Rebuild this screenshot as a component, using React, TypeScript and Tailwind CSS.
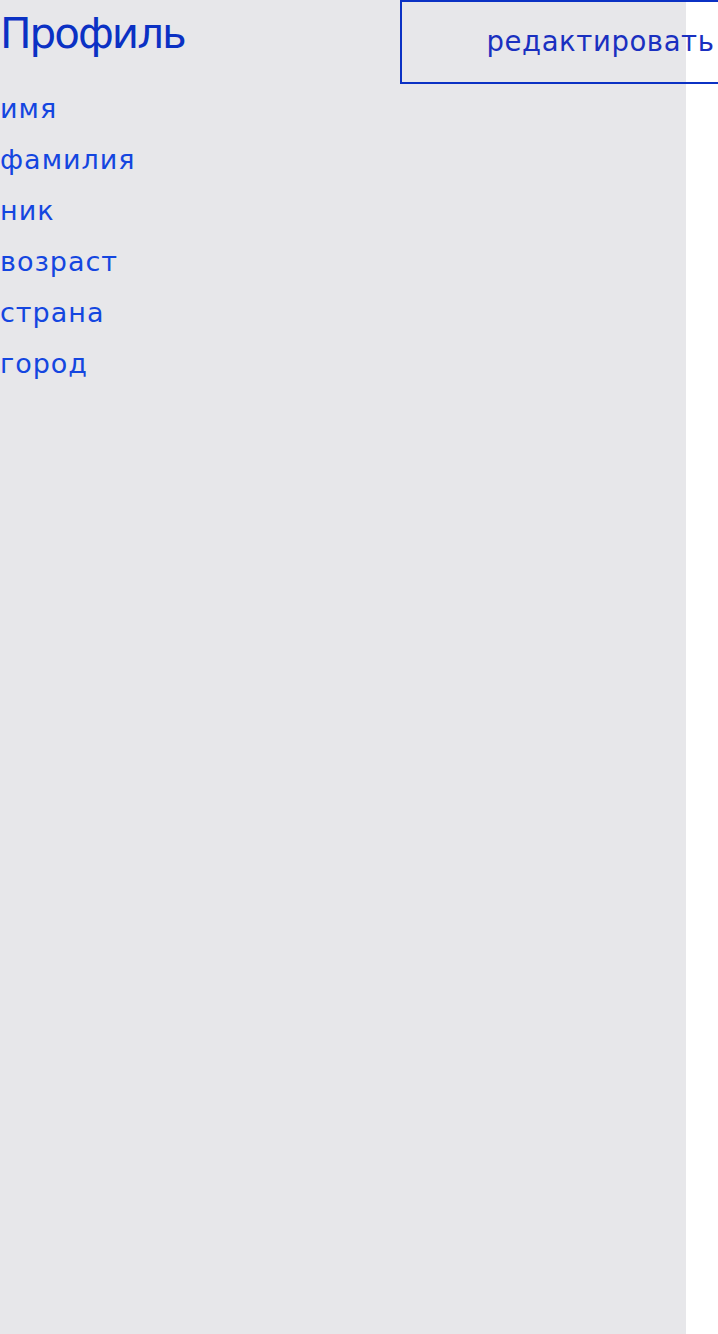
import React from "react";

export default function App() {
  const items = ["имя", "фамилия", "ник", "возраст", "страна", "город"];
  return (
    <div className="w-[718px] h-[1334px] overflow-hidden bg-white" style={{ fontFamily: '"DejaVu Sans", sans-serif' }}>
      <div className="w-[686px] h-[1334px] bg-[#e7e7ea]">
        <div className="flex items-start">
          <h1 className="w-[400px] shrink-0 text-[42px] leading-none text-[#0b31c4] pt-[13px] tracking-[-2px]">Профиль</h1>
          <button className="shrink-0 w-[401px] h-[84px] border-2 border-[#0b31c4] text-[27.5px] tracking-[0.6px] text-[#1a30c0] bg-transparent">
            редактировать
          </button>
        </div>
        <div className="flex flex-col -mt-[1px]">
          {items.map((t) => (
            <div key={t} className="text-[27px] leading-[51px] text-[#1446e0] tracking-[1px]">
              {t}
            </div>
          ))}
        </div>
      </div>
    </div>
  );
}
